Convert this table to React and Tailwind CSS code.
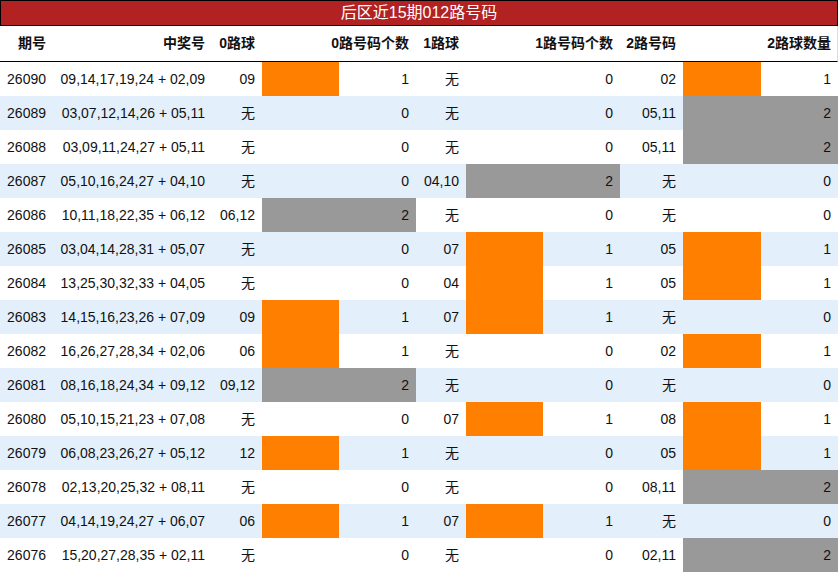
import React from 'react';

const rows = [
  ['26090', '09,14,17,19,24 + 02,09', '09', 1, '无', 0, '02', 1],
  ['26089', '03,07,12,14,26 + 05,11', '无', 0, '无', 0, '05,11', 2],
  ['26088', '03,09,11,24,27 + 05,11', '无', 0, '无', 0, '05,11', 2],
  ['26087', '05,10,16,24,27 + 04,10', '无', 0, '04,10', 2, '无', 0],
  ['26086', '10,11,18,22,35 + 06,12', '06,12', 2, '无', 0, '无', 0],
  ['26085', '03,04,14,28,31 + 05,07', '无', 0, '07', 1, '05', 1],
  ['26084', '13,25,30,32,33 + 04,05', '无', 0, '04', 1, '05', 1],
  ['26083', '14,15,16,23,26 + 07,09', '09', 1, '07', 1, '无', 0],
  ['26082', '16,26,27,28,34 + 02,06', '06', 1, '无', 0, '02', 1],
  ['26081', '08,16,18,24,34 + 09,12', '09,12', 2, '无', 0, '无', 0],
  ['26080', '05,10,15,21,23 + 07,08', '无', 0, '07', 1, '08', 1],
  ['26079', '06,08,23,26,27 + 05,12', '12', 1, '无', 0, '05', 1],
  ['26078', '02,13,20,25,32 + 08,11', '无', 0, '无', 0, '08,11', 2],
  ['26077', '04,14,19,24,27 + 06,07', '06', 1, '07', 1, '无', 0],
  ['26076', '15,20,27,28,35 + 02,11', '无', 0, '无', 0, '02,11', 2],
];

const cols = 'grid grid-cols-[53px_159px_50px_154px_50px_154px_63px_155px]';

// 个数列：条形宽度 = 个数 / 2
const Bar = ({ n }) => (
  <div className="grid h-full">
    <div className="col-start-1 row-start-1 h-full">
      {n > 0 && (
        <div
          className={`h-full ${n === 1 ? 'bg-[#ff8000]' : 'bg-[#999999]'}`}
          style={{ width: `${n * 50}%` }}
        />
      )}
    </div>
    <div className="col-start-1 row-start-1 flex items-center justify-end pr-[7px]">{n}</div>
  </div>
);

const Cell = ({ children }) => (
  <div className="flex items-center justify-end pr-[7px] whitespace-nowrap">{children}</div>
);

const App = () => {
  return (
    <div
      className="w-[838px] h-[573px] bg-white text-[14px] text-[#111] overflow-hidden"
      style={{ fontFamily: '"Liberation Sans", "Noto Sans CJK SC", sans-serif' }}
    >
      <div className="h-[26px] bg-[#b22222] border border-black flex items-center justify-center text-white text-[16px]">
        后区近15期012路号码
      </div>

      <div className={`${cols} h-[36px] border-b border-black font-bold border-r border-r-[#ddd]`}>
        <Cell>期号</Cell>
        <Cell>中奖号</Cell>
        <Cell>0路球</Cell>
        <Cell>0路号码个数</Cell>
        <Cell>1路球</Cell>
        <Cell>1路号码个数</Cell>
        <Cell>2路号码</Cell>
        <Cell>2路球数量</Cell>
      </div>

      {rows.map((r, i) => (
        <div key={r[0]} className={`${cols} h-[34px] ${i % 2 === 1 ? 'bg-[#e3f0fb]' : 'bg-white'}`}>
          <Cell>{r[0]}</Cell>
          <Cell>{r[1]}</Cell>
          <Cell>{r[2]}</Cell>
          <Bar n={r[3]} />
          <Cell>{r[4]}</Cell>
          <Bar n={r[5]} />
          <Cell>{r[6]}</Cell>
          <Bar n={r[7]} />
        </div>
      ))}
    </div>
  );
};

export default App;
